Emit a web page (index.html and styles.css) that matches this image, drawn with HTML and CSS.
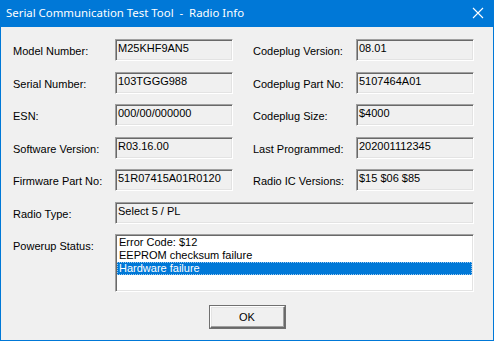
FILE: index.html
```html
<!DOCTYPE html>
<html>
<head>
  <meta charset="UTF-8">
  <title>Radio Info</title>
  <link rel="stylesheet" href="styles.css">
</head>
<body>
  <div class="window">
    <div class="titlebar">
      <span class="title">Serial Communication Test Tool  -  Radio Info</span>
      <svg class="close" width="12" height="12" viewBox="0 0 12 12">
        <path d="M1 1 L11 11 M11 1 L1 11" stroke="#fff" stroke-width="1.1" fill="none"/>
      </svg>
    </div>

    <div class="content">
      <div class="grid">
        <div class="label">Model Number:</div>
        <div class="field">M25KHF9AN5</div>
        <div class="label">Codeplug Version:</div>
        <div class="field">08.01</div>

        <div class="label">Serial Number:</div>
        <div class="field">103TGGG988</div>
        <div class="label">Codeplug Part No:</div>
        <div class="field">5107464A01</div>

        <div class="label">ESN:</div>
        <div class="field">000/00/000000</div>
        <div class="label">Codeplug Size:</div>
        <div class="field">$4000</div>

        <div class="label">Software Version:</div>
        <div class="field">R03.16.00</div>
        <div class="label">Last Programmed:</div>
        <div class="field">202001112345</div>

        <div class="label">Firmware Part No:</div>
        <div class="field">51R07415A01R0120</div>
        <div class="label">Radio IC Versions:</div>
        <div class="field">$15 $06 $85</div>

        <div class="label">Radio Type:</div>
        <div class="field wide">Select 5 / PL</div>

        <div class="label">Powerup Status:</div>
        <div class="listbox wide">
          <div class="item">Error Code: $12</div>
          <div class="item">EEPROM checksum failure</div>
          <div class="item selected">Hardware failure</div>
        </div>
      </div>

      <div class="buttons">
        <button class="btn">OK</button>
      </div>
    </div>
  </div>
</body>
</html>
```

FILE: styles.css
```css
body {
  margin: 0;
  background-color: #f0f0f0;
  font-family: "Liberation Sans", Arial, sans-serif;
  font-size: 11px;
  color: #000;
}
.window {
  width: 494px;
  height: 341px;
  box-sizing: border-box;
  border: 1px solid #0078d7;
  border-top: none;
  background-color: #f0f0f0;
  display: flex;
  flex-direction: column;
}
.titlebar {
  height: 27px;
  flex: none;
  background-color: #0078d7;
  margin: 0 -1px;
  display: flex;
  align-items: center;
  justify-content: space-between;
  padding: 0 10px 0 6px;
}
.title {
  font-family: "Noto Sans", sans-serif;
  font-size: 11.4px;
  color: #fff;
  white-space: pre;
  margin-top: -2px;
}
.close {
  display: block;
  margin-top: -2px;
}
.content {
  flex: 1;
  padding: 12px 0 0 12px;
  display: flex;
  flex-direction: column;
}
.grid {
  display: grid;
  grid-template-columns: 102px 138px 103px 118px;
  grid-template-rows: repeat(6, 22px) 58px;
  row-gap: 10.5px;
}
.label {
  padding-top: 6px;
  line-height: 13px;
  white-space: nowrap;
}
.field {
  width: 118px;
  box-sizing: border-box;
  border: 1px solid;
  border-color: #a0a0a0 #fff #fff #a0a0a0;
  box-shadow: inset 1px 1px #696969, inset -1px -1px #e3e3e3;
  padding: 2px 2px 0 2px;
  line-height: 13px;
  white-space: nowrap;
  overflow: hidden;
}
.wide {
  grid-column: 2 / 5;
  width: auto;
}
.listbox {
  box-sizing: border-box;
  background-color: #fff;
  border: 1px solid;
  border-color: #a0a0a0 #fff #fff #a0a0a0;
  box-shadow: inset 1px 1px #696969, inset -1px -1px #e3e3e3;
  padding: 1px 1px 0 1px;
}
.item {
  line-height: 13px;
  padding-left: 2px;
}
.item.selected {
  background-color: #0078d7;
  color: #fff;
  outline: 1px dotted #9cc8ee;
  outline-offset: -1px;
}
.buttons {
  display: flex;
  justify-content: center;
  margin-top: 14px;
  padding-right: 12px;
}
.btn {
  width: 75px;
  height: 22px;
  box-sizing: border-box;
  font-family: "Liberation Sans", Arial, sans-serif;
  font-size: 11px;
  background-color: #f0f0f0;
  border: 1px solid;
  border-color: #fff #696969 #696969 #fff;
  box-shadow: inset -1px -1px #a0a0a0, inset 1px 1px #e3e3e3, 0 0 0 1px #707070;
  padding: 0;
  color: #000;
}
```
